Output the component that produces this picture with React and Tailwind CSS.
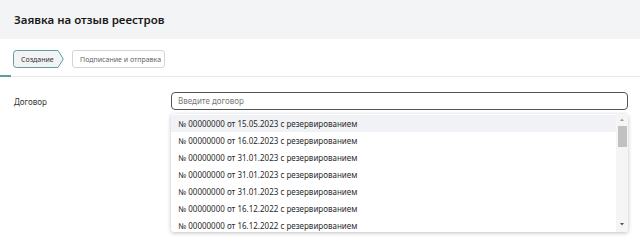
import React from "react";

const items = [
  "15.05.2023",
  "16.02.2023",
  "31.01.2023",
  "31.01.2023",
  "31.01.2023",
  "16.12.2022",
  "16.12.2022",
];

export default function App() {
  return (
    <div className="w-[640px] h-[252px] bg-white overflow-hidden" style={{ fontFamily: '"Noto Sans", "Open Sans", sans-serif' }}>
      <div className="h-[39px] bg-[#f3f4f6] flex items-center px-[14px]">
        <h1 className="text-[11.5px] font-semibold text-[#1a1a1a] leading-none">Заявка на отзыв реестров</h1>
      </div>
      <div className="flex items-center gap-[8px] pl-[13px] pt-[11px]">
        <div className="relative w-[51px] h-[18px] flex items-center pl-[8px]">
          <svg className="absolute inset-0" width="51" height="18" viewBox="0 0 51 18">
            <path d="M3.5 0.5 H45 L50.3 9 L45 17.5 H3.5 A3 3 0 0 1 0.5 14.5 V3.5 A3 3 0 0 1 3.5 0.5 Z" fill="#f1f3f4" stroke="#5f9ea0" strokeWidth="1" />
          </svg>
          <span className="relative text-[7px] text-[#333] leading-none whitespace-nowrap">Создание</span>
        </div>
        <div className="h-[18px] w-[93px] border border-[#d4d4d4] rounded-[3px] flex items-center pl-[7px]">
          <span className="text-[7px] text-[#666] leading-none whitespace-nowrap">Подписание и отправка</span>
        </div>
      </div>
      <div className="mt-[8px] h-px bg-[#e8e8e8] relative">
        <div className="absolute left-0 top-[-1px] w-[11px] h-[2px] bg-[#5f9ea0]" />
      </div>
      <div className="flex pt-[15px]">
        <div className="w-[171px] pl-[14px] pt-[4px] text-[8px] text-[#333]">Договор</div>
        <div className="w-[457px] flex flex-col">
          <div className="h-[18px] border border-[#555] rounded-[4px] flex items-center pl-[6px]">
            <span className="text-[8px] text-[#777]">Введите договор</span>
          </div>
          <div className="mt-[4px] h-[118px] bg-white rounded-[3px] shadow-[0_1px_4px_rgba(0,0,0,0.25)] flex overflow-hidden">
            <div className="flex-1 flex flex-col pt-[1px]">
              {items.map((d, i) => (
                <div key={i} className={`h-[17px] shrink-0 flex items-center pl-[7px] text-[8px] text-[#2a2a2a] whitespace-nowrap ${i === 0 ? "bg-[#f0f2f5]" : ""}`}>
                  № 00000000 от {d} с резервированием
                </div>
              ))}
            </div>
            <div className="w-[12px] bg-[#f5f5f5] flex flex-col items-center">
              <svg width="12" height="10" viewBox="0 0 12 10" className="mt-[1px]"><path d="M4 6 L6 3.5 L8 6 Z" fill="#a0a0a0" /></svg>
              <div className="w-[9px] h-[21px] bg-[#c1c1c1] mt-[1px]" />
              <div className="flex-1" />
              <svg width="12" height="10" viewBox="0 0 12 10" className="mb-[3px]"><path d="M4 4 L6 6.5 L8 4 Z" fill="#505050" /></svg>
            </div>
          </div>
        </div>
      </div>
    </div>
  );
}
